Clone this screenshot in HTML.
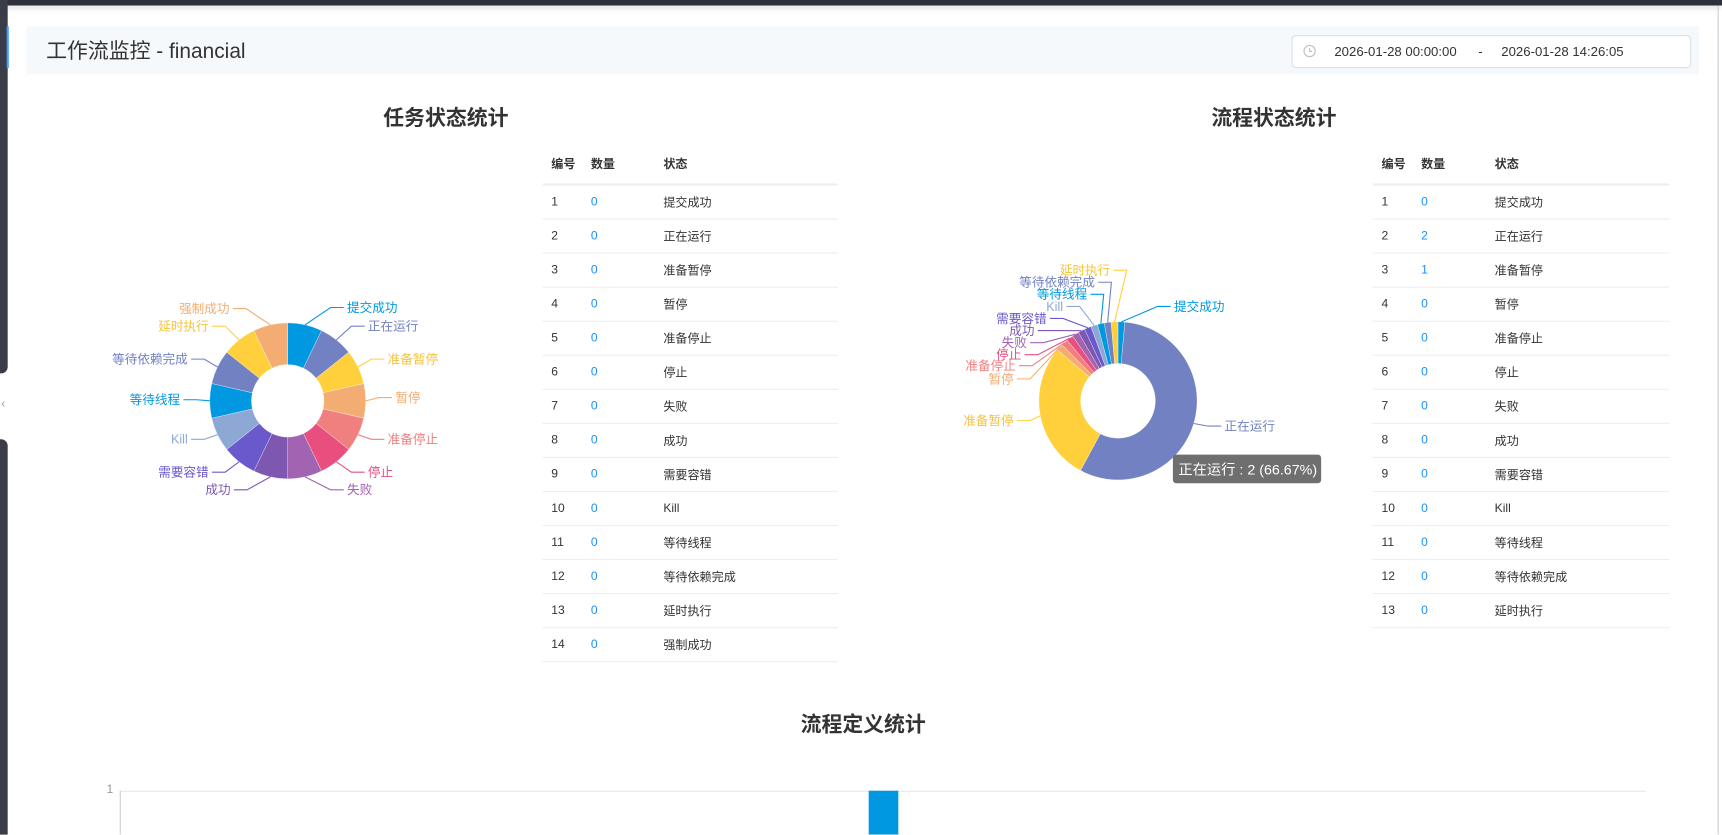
<!DOCTYPE html>
<html><head><meta charset="utf-8">
<style>
html,body{margin:0;padding:0;background:#fff;overflow:hidden;width:1722px;height:834px}
#w{position:absolute;left:0;top:0;width:1568px;height:760px;transform:scale(1.09821);transform-origin:0 0;font-family:"Liberation Sans","Noto Sans CJK SC",sans-serif;color:#333}
.abs{position:absolute}
.t{position:absolute;font-size:19px;font-weight:bold;color:#333;transform:translateX(-50%);white-space:nowrap}
table{position:absolute;border-collapse:collapse;font-size:11px;color:#333}
td,th{height:30px;padding:0 0 0 8px;text-align:left;border-bottom:1px solid #ebeef5}
th{height:36px;font-weight:bold;border-bottom:2px solid #ebeef5}
td.n{color:#1890ff}
</style></head><body>
<div id="w">
<div class="abs" style="left:0;top:0;width:1568px;height:5px;background:#2d2f3b;box-shadow:0 2px 6px rgba(0,0,0,.15)"></div>
<div class="abs" style="left:0;top:0;width:7px;height:340px;background:#3a3d48;border-bottom-right-radius:6px"></div>
<div class="abs" style="left:0;top:400px;width:7px;height:360px;background:#3a3d48;border-top-right-radius:6px"></div>
<div class="abs" style="left:1px;top:362px;font-size:11px;color:#999">‹</div>
<div class="abs" style="left:6px;top:24px;width:2px;height:38px;background:#409eff"></div>
<div class="abs" style="left:1564px;top:5px;width:1px;height:755px;background:#ccc"></div>

<div class="abs" style="left:24px;top:24px;width:1523px;height:44px;background:#f6f9fc"></div>
<div class="abs" style="left:42px;top:32px;font-size:19px;color:#333">工作流监控 - financial</div>
<div class="abs" style="left:1176px;top:32px;width:362px;height:28px;border:1px solid #dcdfe6;border-radius:4px;background:#fff;font-size:12px;color:#333">
 <svg class="abs" style="left:9px;top:7px" width="13" height="13" viewBox="0 0 14 14"><circle cx="7" cy="7" r="5.5" fill="none" stroke="#c0c4cc" stroke-width="1.2"/><path d="M7 4v3.3h2.5" fill="none" stroke="#c0c4cc" stroke-width="1.2"/></svg>
 <span class="abs" style="left:38px;top:7px">2026-01-28 00:00:00</span>
 <span class="abs" style="left:169px;top:7px">-</span>
 <span class="abs" style="left:190px;top:7px">2026-01-28 14:26:05</span>
</div>

<div class="t" style="left:406px;top:93px">任务状态统计</div>
<div class="t" style="left:1160px;top:93px">流程状态统计</div>
<div class="t" style="left:786px;top:645px">流程定义统计</div>

<table style="left:494px;top:131px;width:269px">
<tr><th style="width:28px">编号</th><th style="width:58px">数量</th><th>状态</th></tr>
<tr><td>1</td><td class="n">0</td><td>提交成功</td></tr>
<tr><td>2</td><td class="n">0</td><td>正在运行</td></tr>
<tr><td>3</td><td class="n">0</td><td>准备暂停</td></tr>
<tr><td>4</td><td class="n">0</td><td>暂停</td></tr>
<tr><td>5</td><td class="n">0</td><td>准备停止</td></tr>
<tr><td>6</td><td class="n">0</td><td>停止</td></tr>
<tr><td>7</td><td class="n">0</td><td>失败</td></tr>
<tr><td>8</td><td class="n">0</td><td>成功</td></tr>
<tr><td>9</td><td class="n">0</td><td>需要容错</td></tr>
<tr><td>10</td><td class="n">0</td><td>Kill</td></tr>
<tr><td>11</td><td class="n">0</td><td>等待线程</td></tr>
<tr><td>12</td><td class="n">0</td><td>等待依赖完成</td></tr>
<tr><td>13</td><td class="n">0</td><td>延时执行</td></tr>
<tr><td>14</td><td class="n">0</td><td>强制成功</td></tr>
</table>
<table style="left:1250px;top:131px;width:270px">
<tr><th style="width:28px">编号</th><th style="width:59px">数量</th><th>状态</th></tr>
<tr><td>1</td><td class="n">0</td><td>提交成功</td></tr>
<tr><td>2</td><td class="n">2</td><td>正在运行</td></tr>
<tr><td>3</td><td class="n">1</td><td>准备暂停</td></tr>
<tr><td>4</td><td class="n">0</td><td>暂停</td></tr>
<tr><td>5</td><td class="n">0</td><td>准备停止</td></tr>
<tr><td>6</td><td class="n">0</td><td>停止</td></tr>
<tr><td>7</td><td class="n">0</td><td>失败</td></tr>
<tr><td>8</td><td class="n">0</td><td>成功</td></tr>
<tr><td>9</td><td class="n">0</td><td>需要容错</td></tr>
<tr><td>10</td><td class="n">0</td><td>Kill</td></tr>
<tr><td>11</td><td class="n">0</td><td>等待线程</td></tr>
<tr><td>12</td><td class="n">0</td><td>等待依赖完成</td></tr>
<tr><td>13</td><td class="n">0</td><td>延时执行</td></tr>
</table>

<svg class="abs" style="left:0;top:0" width="1568" height="760" font-size="11.5" font-family="Liberation Sans,Noto Sans CJK SC,sans-serif">
<g id="d1"></g><g id="d2"></g>
<g id="l1">
<text x="316" y="284" fill="#0098e1">提交成功</text>
<text x="335" y="301" fill="#7181c2">正在运行</text>
<text x="353" y="331" fill="#f5c33a">准备暂停</text>
<text x="360" y="366" fill="#f3ad72">暂停</text>
<text x="353" y="404" fill="#f0807f">准备停止</text>
<text x="335" y="434" fill="#e84f7e">停止</text>
<text x="316" y="450" fill="#a264b0">失败</text>
<text x="210" y="450" fill="#7e57b1" text-anchor="end">成功</text>
<text x="190" y="434" fill="#6959cd" text-anchor="end">需要容错</text>
<text x="171" y="404" fill="#8ea8d6" text-anchor="end">Kill</text>
<text x="164" y="368" fill="#0098e1" text-anchor="end">等待线程</text>
<text x="171" y="331" fill="#7181c2" text-anchor="end">等待依赖完成</text>
<text x="190" y="301" fill="#f5c33a" text-anchor="end">延时执行</text>
<text x="209" y="285" fill="#f3ad72" text-anchor="end">强制成功</text>
</g>
<g id="l2">
<text x="1069" y="283" fill="#0098e1">提交成功</text>
<text x="1115" y="392" fill="#7181c2">正在运行</text>
<text x="923" y="387" fill="#f5c33a" text-anchor="end">准备暂停</text>
<text x="923" y="349" fill="#f3ad72" text-anchor="end">暂停</text>
<text x="925" y="337" fill="#f0807f" text-anchor="end">准备停止</text>
<text x="930" y="327" fill="#e84f7e" text-anchor="end">停止</text>
<text x="935" y="316" fill="#a264b0" text-anchor="end">失败</text>
<text x="942" y="305" fill="#7e57b1" text-anchor="end">成功</text>
<text x="953" y="294" fill="#6959cd" text-anchor="end">需要容错</text>
<text x="968" y="283" fill="#8ea8d6" text-anchor="end">Kill</text>
<text x="990" y="272" fill="#0098e1" text-anchor="end">等待线程</text>
<text x="997" y="261" fill="#7181c2" text-anchor="end">等待依赖完成</text>
<text x="1011" y="250" fill="#f5c33a" text-anchor="end">延时执行</text>
</g>
<g id="ln"></g>
<rect x="1068" y="414" width="135" height="26" rx="3" fill="#6f6f6f"/>
<text x="1073" y="432" fill="#fff" font-size="13">正在运行 : 2 (66.67%)</text>
<text x="97" y="722" fill="#999" font-size="11">1</text>
<line x1="109" y1="720.5" x2="1499" y2="720.5" stroke="#e6e6e6"/>
<line x1="109.5" y1="720" x2="109.5" y2="760" stroke="#ccc"/>
<rect x="791" y="720" width="27" height="40" fill="#0098e1"/>
</svg>
</div>
<script>
var C=["#0098e1","#7181c2","#ffcf3c","#f3ad72","#f0807f","#e84f7e","#a264b0","#7e57b1","#6959cd","#8ea8d6","#0098e1","#7181c2","#ffcf3c","#f3ad72"];
function pt(cx,cy,r,a){a=a*Math.PI/180;return [cx+r*Math.sin(a),cy-r*Math.cos(a)];}
function arc(cx,cy,r0,r1,a0,a1){var p=pt(cx,cy,r1,a0),q=pt(cx,cy,r1,a1),s=pt(cx,cy,r0,a1),t=pt(cx,cy,r0,a0),L=(a1-a0)>180?1:0;
return "M"+p+"A"+r1+","+r1+" 0 "+L+" 1 "+q+"L"+s+"A"+r0+","+r0+" 0 "+L+" 0 "+t+"Z";}
var ns="http://www.w3.org/2000/svg";
function draw(g,lg,cx,cy,r0,r1,angs){var G=document.getElementById(g),T=document.getElementById(lg).children,N=document.getElementById("ln");
for(var i=0;i<angs.length;i++){var a0=angs[i][0],a1=angs[i][1];var p=document.createElementNS(ns,"path");p.setAttribute("d",arc(cx,cy,r0,r1,a0,a1));p.setAttribute("fill",C[i]);p.setAttribute("stroke","#fff");p.setAttribute("stroke-width","0.3");G.appendChild(p);
if(i<T.length){var tx=+T[i].getAttribute("x"),ty=+T[i].getAttribute("y")-4,end=T[i].getAttribute("text-anchor")=="end";var m=pt(cx,cy,r1,(a0+a1)/2);var ex=end?tx+3:tx-3,bx=end?ex+12:ex-12;
var l=document.createElementNS(ns,"polyline");l.setAttribute("points",m+" "+bx+","+ty+" "+ex+","+ty);l.setAttribute("fill","none");l.setAttribute("stroke",C[i]);N.appendChild(l);}}}
var a=[];for(var i=0;i<14;i++)a.push([i*360/14,(i+1)*360/14]);
draw("d1","l1",262,365,33,71,a);
var b=[[0,5],[5,208.3],[208.3,310]];for(var i=0;i<10;i++)b.push([310+i*5,315+i*5]);
draw("d2","l2",1018,365,34,72,b);
</script>
</body></html>
